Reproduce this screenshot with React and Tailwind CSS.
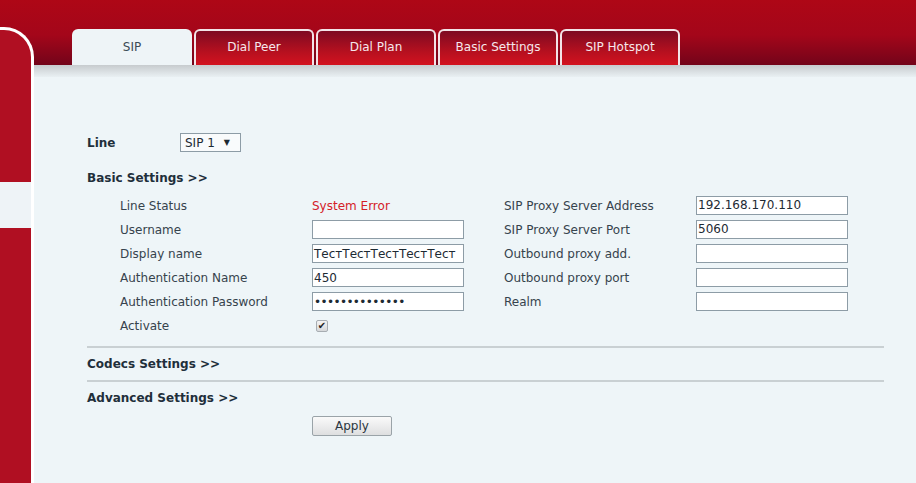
import React from "react";

const font = { fontFamily: '"DejaVu Sans", Verdana, sans-serif' };

function Input({ value }) {
  return (
    <div className="w-[152px] h-[19px] border border-[#8d9ca6] bg-white flex items-center pl-[1px] text-[12px] text-[#1d2a33] leading-none">
      {value}
    </div>
  );
}

function Tab({ label, active }) {
  if (active) {
    return (
      <div className="w-[120px] h-[36px] rounded-t-[6px] bg-[#eef4f7] flex items-center justify-center text-[12px] text-[#3b4a55]">
        {label}
      </div>
    );
  }
  return (
    <div className="w-[120px] h-[36px] rounded-t-[6px] border-[2px] border-b-0 border-[#f3e4e8] bg-[linear-gradient(to_bottom,#7e0a22,#b5101f_60%,#d3121f)] flex items-center justify-center text-[12px] text-[#f6e8ec] pb-[2px]">
      {label}
    </div>
  );
}

function Row({ label, children, label2, children2 }) {
  return (
    <div className="flex h-[24px] items-center">
      <div className="w-[225px] pl-[33px] pt-[1px] text-[#36434d]">{label}</div>
      <div className="w-[192px] flex items-center pt-[1px]">{children}</div>
      <div className="w-[192px] pt-[1px] text-[#36434d]">{label2}</div>
      <div className="flex items-center">{children2}</div>
    </div>
  );
}

export default function App() {
  return (
    <div
      style={font}
      className="w-[916px] h-[483px] overflow-hidden flex bg-[linear-gradient(to_bottom,#ae0716_0px,#a4061a_35px,#73041a_65px,#eef5f8_65px)] text-[12px]"
    >
      {/* sidebar */}
      <div className="w-[34px] pt-[27px] flex flex-col shrink-0">
        <div className="flex-1 rounded-tr-[30px] border-t-[3px] border-r-[3px] border-white bg-[#b00f22] flex flex-col">
          <div className="h-[152px]" />
          <div className="h-[46px] bg-[#eef3f7]" />
          <div className="flex-1" />
        </div>
      </div>

      {/* main */}
      <div className="flex-1 flex flex-col">
        <div className="h-[65px] flex items-end pl-[38px] gap-[2px]">
          <Tab label="SIP" active />
          <Tab label="Dial Peer" />
          <Tab label="Dial Plan" />
          <Tab label="Basic Settings" />
          <Tab label="SIP Hotspot" />
        </div>
        <div className="h-[12px] bg-[linear-gradient(to_bottom,#c7cbce,#dfe5e8_70%,#e9f0f3)]" />
        <div className="flex-1 bg-[#eef5f8] pl-[53px] pr-[32px] pt-[56px] flex flex-col">
          <div className="flex h-[19px] items-center">
            <div className="w-[93px] pt-[1px] font-bold text-[#1f2f3b]">Line</div>
            <div className="w-[61px] h-[19px] border border-[#8d9ca6] bg-[#f9fbfc] flex items-center pl-[4px] text-[#1d2a33]">
              <span>SIP 1</span>
              <span className="ml-[9px] text-[8px] leading-none">▼</span>
            </div>
          </div>

          <div className="mt-[16px] h-[20px] flex items-center font-bold text-[#1f2f3b]">
            Basic Settings &gt;&gt;
          </div>

          <div className="mt-[5px] flex flex-col">
            <Row label="Line Status" label2="SIP Proxy Server Address" children2={<Input value="192.168.170.110" />}>
              <span className="text-[#d42028]">System Error</span>
            </Row>
            <Row label="Username" label2="SIP Proxy Server Port" children2={<Input value="5060" />}>
              <Input value="" />
            </Row>
            <Row label="Display name" label2="Outbound proxy add." children2={<Input value="" />}>
              <Input value="ТестТестТестТестТест" />
            </Row>
            <Row label="Authentication Name" label2="Outbound proxy port" children2={<Input value="" />}>
              <Input value="450" />
            </Row>
            <Row label="Authentication Password" label2="Realm" children2={<Input value="" />}>
              <Input value={<span className="tracking-[-0.6px] text-[12px] text-[#1d2a33]">{"••••••••••••••"}</span>} />
            </Row>
            <Row label="Activate">
              <span className="ml-[4px] w-[12px] h-[12px] rounded-[2px] border border-[#a7adb2] bg-[linear-gradient(to_bottom,#f4f4f4,#d6d8da)] flex items-center justify-center text-[10px] leading-none text-[#222]">
                ✔
              </span>
            </Row>
          </div>

          <div className="mt-[9px] h-[2px] bg-[#c9d0d3]" />
          <div className="mt-[6px] h-[20px] flex items-center font-bold text-[#1f2f3b]">
            Codecs Settings &gt;&gt;
          </div>
          <div className="mt-[6px] h-[2px] bg-[#c9d0d3]" />
          <div className="mt-[6px] h-[20px] flex items-center font-bold text-[#1f2f3b]">
            Advanced Settings &gt;&gt;
          </div>
          <div className="mt-[8px] ml-[225px]">
            <div className="w-[80px] h-[20px] border border-[#9aa3a8] rounded-[2px] bg-[linear-gradient(to_bottom,#fafafa,#dedfe0)] flex items-center justify-center text-[#2a3640]">
              Apply
            </div>
          </div>
        </div>
      </div>
    </div>
  );
}
